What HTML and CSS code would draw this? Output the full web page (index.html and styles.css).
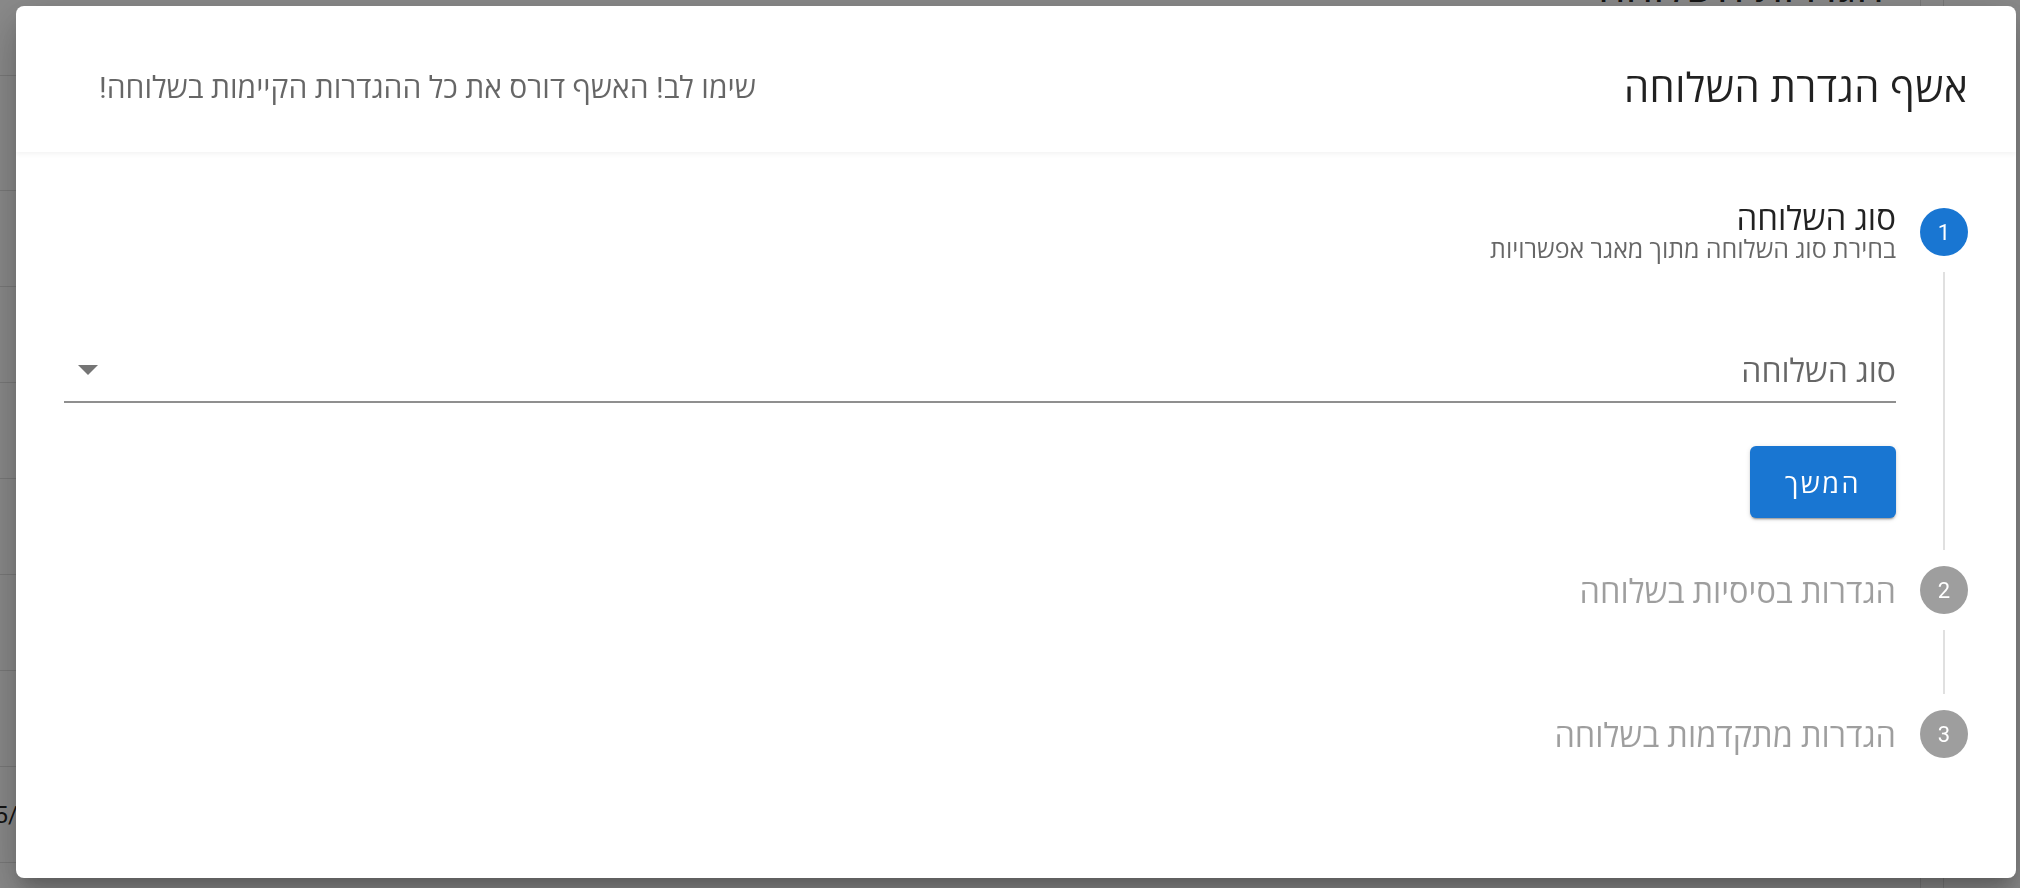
FILE: index.html
```html
<!DOCTYPE html>
<html lang="he">
  <head>
    <meta charset="utf-8">
    <meta name="viewport" content="width=device-width, initial-scale=1">
    <title>אשף הגדרת השלוחה</title>
    <link rel="stylesheet" href="styles.css">
  </head>

  <body>
    <div class="page" dir="rtl">
      <div class="page-side"></div>
      <div class="page-gap"></div>
      <div class="page-main">
        <div class="page-head"><span class="page-title">הגדרות השלוחה</span></div>
        <div class="page-row first"></div>
        <div class="page-row"></div>
        <div class="page-row"></div>
        <div class="page-row"></div>
        <div class="page-row"></div>
        <div class="page-row"></div>
        <div class="page-row"></div>
        <div class="page-row"><span class="page-date">05/05/2025</span></div>
      </div>
    </div>
    <div class="overlay"></div>

    <div class="dialog" dir="rtl">
      <div class="dialog-head">
        <h2 class="dialog-title">אשף הגדרת השלוחה</h2>
        <div class="dialog-warning">שימו לב! האשף דורס את כל ההגדרות הקיימות בשלוחה!</div>
      </div>

      <div class="stepper">
        <div class="step-head">
          <span class="step-num active">1</span>
          <div class="step-label">
            <div class="step-title">סוג השלוחה</div>
            <div class="step-sub">בחירת סוג השלוחה מתוך מאגר אפשרויות</div>
          </div>
        </div>
        <div class="step-body">
          <div class="rail"><span class="rail-line"></span></div>
          <div class="step-content">
            <div class="select">
              <span class="select-label">סוג השלוחה</span>
              <span class="select-arrow"></span>
            </div>
            <button class="btn">המשך</button>
          </div>
        </div>

        <div class="step-head">
          <span class="step-num">2</span>
          <div class="step-label">
            <div class="step-name">הגדרות בסיסיות בשלוחה</div>
          </div>
        </div>
        <div class="step-body short">
          <div class="rail"><span class="rail-line"></span></div>
        </div>

        <div class="step-head">
          <span class="step-num">3</span>
          <div class="step-label">
            <div class="step-name">הגדרות מתקדמות בשלוחה</div>
          </div>
        </div>
      </div>
    </div>
  </body>
</html>
```

FILE: styles.css
```css
body {
  margin: 0;
  font-family: Roboto, "Open Sans", "Noto Sans", sans-serif;
  background: #fff;
  color: rgba(0, 0, 0, .87);
}

/* page behind the dialog */
.page {
  display: flex;
  height: 888px;
  overflow: hidden;
}
.page-side {
  width: 76px;
  flex-shrink: 0;
  border-left: 1px solid #e0e0e0;
}
.page-gap {
  width: 22px;
  flex-shrink: 0;
  border-left: 1px solid #e0e0e0;
}
.page-main {
  flex-grow: 1;
  overflow: hidden;
}
.page-head {
  display: flow-root;
  height: 75px;
  border-bottom: 1px solid #e0e0e0;
  padding-right: 36px;
}
.page-title {
  display: block;
  font-size: 44px;
  line-height: 44px;
  margin-top: -35px;
}
.page-row {
  height: 95px;
  border-bottom: 1px solid #e0e0e0;
  display: flex;
  align-items: center;
  justify-content: flex-end;
}
.page-row.first {
  height: 114px;
}
.page-date {
  direction: ltr;
  font-size: 24px;
  margin-left: -19px;
}
.overlay {
  position: fixed;
  inset: 0;
  background: rgba(0, 0, 0, .46);
}

/* dialog */
.dialog {
  position: fixed;
  top: 6px;
  left: 16px;
  width: 2000px;
  height: 872px;
  background: #fff;
  border-radius: 8px;
  overflow: hidden;
  display: flex;
  flex-direction: column;
  box-shadow: 0 11px 15px -7px rgba(0,0,0,.2), 0 24px 38px 3px rgba(0,0,0,.14), 0 9px 46px 8px rgba(0,0,0,.12);
}
.dialog-head {
  height: 146px;
  flex-shrink: 0;
  box-sizing: border-box;
  padding: 14px 48px 0 83px;
  display: flex;
  align-items: center;
  justify-content: space-between;
  box-shadow: 0 2px 5px rgba(0, 0, 0, .05);
  position: relative;
  z-index: 1;
}
.dialog-title {
  margin: 0;
  font-size: 40px;
  font-weight: 400;
  letter-spacing: .0125em;
  color: rgba(0, 0, 0, .87);
}
.dialog-warning {
  font-size: 30px;
  color: rgba(0, 0, 0, .6);
}

/* stepper */
.stepper {
  padding: 56px 48px 0 48px;
}
.step-head {
  display: flex;
  align-items: center;
  gap: 24px;
  height: 48px;
}
.step-num {
  width: 48px;
  height: 48px;
  flex-shrink: 0;
  border-radius: 50%;
  background: #9e9e9e;
  color: #fff;
  font-size: 22px;
  display: flex;
  align-items: center;
  justify-content: center;
}
.step-num.active {
  background: #1976d2;
}
.step-title {
  font-size: 33px;
  line-height: 36px;
  color: rgba(0, 0, 0, .87);
}
.step-sub {
  font-size: 25px;
  line-height: 26px;
  color: rgba(0, 0, 0, .6);
}
.step-name {
  font-size: 32.5px;
  color: rgba(0, 0, 0, .38);
}
.step-body {
  display: flex;
  gap: 24px;
  height: 310px;
}
.step-body.short {
  height: 96px;
}
.rail {
  width: 48px;
  flex-shrink: 0;
  display: flex;
  justify-content: center;
  padding: 16px 0;
  box-sizing: border-box;
}
.rail-line {
  width: 2px;
  background: #e0e0e0;
}
.step-content {
  flex-grow: 1;
  padding-top: 82px;
}
.select {
  height: 63px;
  border-bottom: 2px solid #8f8f8f;
  display: flex;
  align-items: center;
  justify-content: space-between;
  padding-left: 14px;
}
.select-label {
  font-size: 32px;
  color: rgba(0, 0, 0, .6);
}
.select-arrow {
  width: 0;
  height: 0;
  border-left: 10px solid transparent;
  border-right: 10px solid transparent;
  border-top: 10px solid #757575;
}
.btn {
  margin-top: 43px;
  width: 146px;
  height: 72px;
  border: 0;
  border-radius: 6px;
  background: #1976d2;
  color: #fff;
  font-family: inherit;
  font-size: 27px;
  letter-spacing: .09em;
  box-shadow: 0 3px 1px -2px rgba(0,0,0,.2), 0 2px 2px 0 rgba(0,0,0,.14), 0 1px 5px 0 rgba(0,0,0,.12);
}
```
